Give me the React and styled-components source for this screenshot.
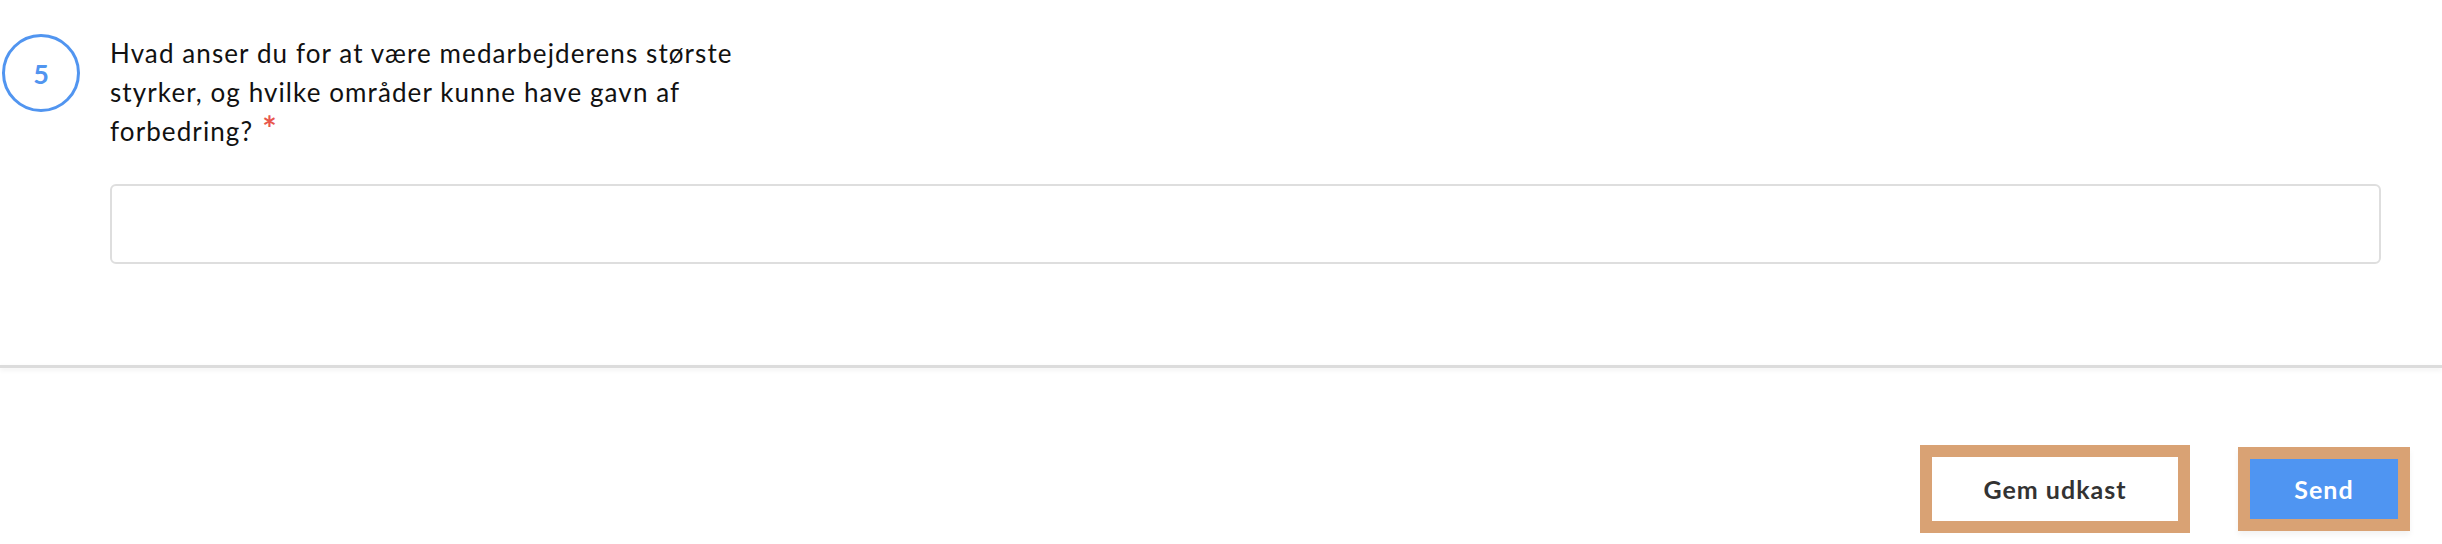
import React from 'react';
import styled, { createGlobalStyle } from 'styled-components';

const GlobalStyle = createGlobalStyle`
  html, body {
    margin: 0;
    padding: 0;
    background: #ffffff;
    font-family: Lato, "Noto Sans", "Liberation Sans", sans-serif;
  }
`

const QuestionSection = styled.section`
  display: flex;
  align-items: flex-start;
  gap: 30px;
  padding: 34px 61px 101px 2px;
`

const NumberBadge = styled.div`
  flex: none;
  box-sizing: border-box;
  width: 78px;
  height: 78px;
  border: 3px solid #5195f0;
  border-radius: 50%;
  display: flex;
  align-items: center;
  justify-content: center;
  color: #5195f0;
  font-size: 27px;
  font-weight: 700;
`

const QuestionBody = styled.div`
  flex: 1;
  min-width: 0;
`

const QuestionText = styled.p`
  margin: 0;
  max-width: 660px;
  color: #111111;
  font-size: 26px;
  line-height: 39px;
  letter-spacing: 1.1px;
`

const Required = styled.span`
  color: #e8574d;
  font-size: 34px;
  line-height: 0;
  font-weight: 700;
  margin-left: 9px;
`

const AnswerInput = styled.input`
  display: block;
  box-sizing: border-box;
  width: 100%;
  height: 80px;
  margin-top: 33px;
  border: 2px solid #dedede;
  border-radius: 6px;
  background: #fff;
  padding: 0 20px;
  font: inherit;
  font-size: 24px;
  outline: none;
`

const Divider = styled.hr`
  margin: 0;
  border: 0;
  height: 3px;
  background: #dcdcdc;
  box-shadow: 0 2px 5px rgba(0, 0, 0, 0.07);
`

const Footer = styled.footer`
  display: flex;
  justify-content: flex-end;
  align-items: center;
  gap: 48px;
  padding: 77px 32px 12px 0;
`

const Button = styled.button`
  box-sizing: content-box;
  width: ${p => (p.$primary ? '148px' : '246px')};
  height: ${p => (p.$primary ? '60px' : '64px')};
  padding: 0;
  border: 12px solid #d9a274;
  background: ${p => (p.$primary ? '#4f95f2' : '#ffffff')};
  color: ${p => (p.$primary ? '#ffffff' : '#333333')};
  font-family: inherit;
  font-size: 25px;
  font-weight: 700;
  letter-spacing: 1px;
  cursor: pointer;
  box-shadow: ${p => (p.$primary ? '0 4px 6px rgba(0,0,0,0.05)' : 'none')};
`

export default function App() {
    return (
        <>
            <GlobalStyle />
            <QuestionSection>
                <NumberBadge>5</NumberBadge>
                <QuestionBody>
                    <QuestionText>
                        Hvad anser du for at være medarbejderens største styrker, og hvilke områder kunne have gavn af forbedring?
                        <Required>*</Required>
                    </QuestionText>
                    <AnswerInput type="text" />
                </QuestionBody>
            </QuestionSection>
            <Divider />
            <Footer>
                <Button>Gem udkast</Button>
                <Button $primary>Send</Button>
            </Footer>
        </>
    );
}
